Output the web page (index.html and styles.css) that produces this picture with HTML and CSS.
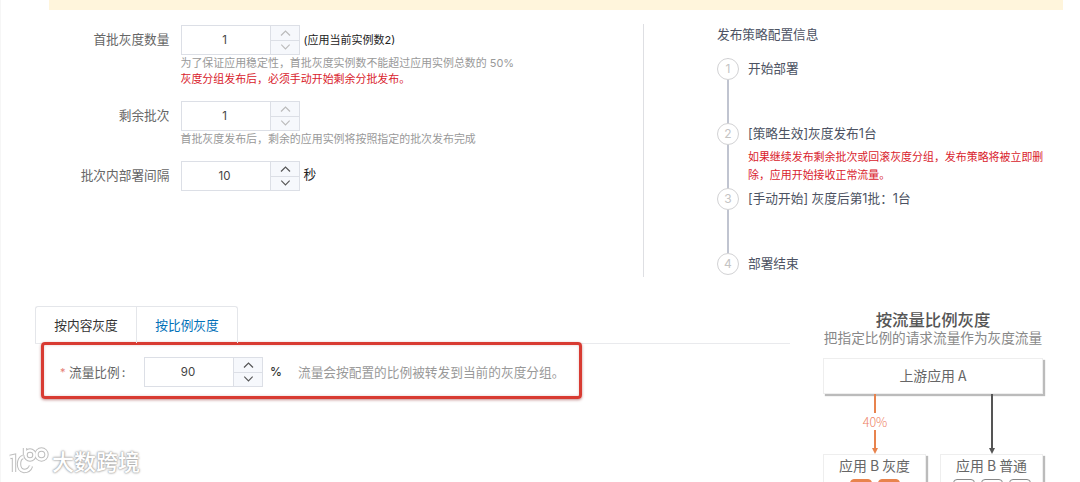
FILE: index.html
```html
<!DOCTYPE html>
<html lang="zh-CN">
<head>
    <meta charset="UTF-8">
    <meta name="viewport" content="width=device-width, initial-scale=1.0">
    <title>灰度发布</title>
    <link rel="stylesheet" href="styles.css">
</head>
<body>
    <div class="notice"></div>

    <div class="config">
        <form class="config-form">
            <div class="form-row row-first">
                <label class="label">首批灰度数量</label>
                <div class="field">
                    <div class="control">
                        <div class="stepper disabled">
                            <span class="value">1</span>
                            <div class="arrows">
                                <svg viewBox="0 0 28 14"><path d="M10 9.5l4.5-4.5 4.5 4.5"/></svg>
                                <svg viewBox="0 0 28 14"><path d="M10 4l4.5 4.5 4.5-4.5"/></svg>
                            </div>
                        </div>
                        <span class="unit small">(应用当前实例数2)</span>
                    </div>
                    <p class="hint">为了保证应用稳定性，首批灰度实例数不能超过应用实例总数的 50%</p>
                    <p class="hint warn">灰度分组发布后，必须手动开始剩余分批发布。</p>
                </div>
            </div>
            <div class="form-row row-second">
                <label class="label">剩余批次</label>
                <div class="field">
                    <div class="control">
                        <div class="stepper disabled">
                            <span class="value">1</span>
                            <div class="arrows">
                                <svg viewBox="0 0 28 14"><path d="M10 9.5l4.5-4.5 4.5 4.5"/></svg>
                                <svg viewBox="0 0 28 14"><path d="M10 4l4.5 4.5 4.5-4.5"/></svg>
                            </div>
                        </div>
                    </div>
                    <p class="hint">首批灰度发布后，剩余的应用实例将按照指定的批次发布完成</p>
                </div>
            </div>
            <div class="form-row">
                <label class="label">批次内部署间隔</label>
                <div class="field">
                    <div class="control">
                        <div class="stepper">
                            <span class="value">10</span>
                            <div class="arrows">
                                <svg viewBox="0 0 28 14"><path d="M10 9.5l4.5-4.5 4.5 4.5"/></svg>
                                <svg viewBox="0 0 28 14"><path d="M10 4l4.5 4.5 4.5-4.5"/></svg>
                            </div>
                        </div>
                        <span class="unit">秒</span>
                    </div>
                </div>
            </div>
        </form>

        <div class="strategy">
            <h3>发布策略配置信息</h3>
            <ol class="steps">
                <li><span class="num">1</span><div class="step-text">开始部署</div></li>
                <li>
                    <span class="num">2</span>
                    <div class="step-text">[策略生效]灰度发布1台
                        <p>如果继续发布剩余批次或回滚灰度分组，发布策略将被立即删<br>除，应用开始接收正常流量。</p>
                    </div>
                </li>
                <li><span class="num">3</span><div class="step-text">[手动开始] 灰度后第1批：1台</div></li>
                <li><span class="num">4</span><div class="step-text">部署结束</div></li>
            </ol>
        </div>
    </div>

    <div class="rules">
        <div class="rules-main">
            <div class="tabs">
                <div class="tab">按内容灰度</div>
                <div class="tab active">按比例灰度</div>
            </div>
            <div class="ratio">
                <span class="required">*</span>
                <label class="ratio-label">流量比例<span class="colon">:</span></label>
                <div class="stepper">
                    <span class="value">90</span>
                    <div class="arrows">
                        <svg viewBox="0 0 28 14"><path d="M10 9.5l4.5-4.5 4.5 4.5"/></svg>
                        <svg viewBox="0 0 28 14"><path d="M10 4l4.5 4.5 4.5-4.5"/></svg>
                    </div>
                </div>
                <span class="percent">%</span>
                <span class="ratio-hint">流量会按配置的比例被转发到当前的灰度分组。</span>
            </div>
        </div>

        <div class="diagram">
            <h4>按流量比例灰度</h4>
            <p class="subtitle">把指定比例的请求流量作为灰度流量</p>
            <div class="box upstream">上游应用 A</div>
            <div class="flows">
                <div class="flow gray-flow">
                    <span class="line short"></span>
                    <span class="rate">40%</span>
                    <span class="line"></span>
                    <span class="head"></span>
                </div>
                <div class="flow">
                    <span class="line"></span>
                    <span class="head"></span>
                </div>
            </div>
            <div class="targets">
                <div class="box target">
                    <span>应用 B 灰度</span>
                    <div class="nodes orange"><i></i><i></i></div>
                </div>
                <div class="box target">
                    <span>应用 B 普通</span>
                    <div class="nodes"><i></i><i></i><i></i></div>
                </div>
            </div>
        </div>
    </div>

    <div class="watermark">
        <svg class="logo" viewBox="0 0 44 32">
            <g class="logo-edge">
                <path d="M5 13l4-1v16"/>
                <path d="M18 13c-5 1-6 13 1 14 4 0 6-2 7-5"/>
                <path d="M20 4v7"/>
                <circle cx="25" cy="11" r="4.5"/>
                <circle cx="36.5" cy="10.5" r="5"/>
            </g>
            <g class="logo-face">
                <path d="M5 13l4-1v16"/>
                <path d="M18 13c-5 1-6 13 1 14 4 0 6-2 7-5"/>
                <path d="M20 4v7"/>
                <circle cx="25" cy="11" r="4.5"/>
                <circle cx="36.5" cy="10.5" r="5"/>
            </g>
        </svg>
        <span>大数跨境</span>
    </div>
</body>
</html>
```

FILE: styles.css
```css
* {
    box-sizing: border-box;
}
html {
    overflow: hidden;
}
body {
    position: relative;
    width: 1080px;
    height: 482px;
    margin: 0;
    overflow: hidden;
    border-left: 1px solid #f6f6f6;
    background-color: #fff;
    color: #333;
    font-family: Inter, "Noto Sans CJK SC", sans-serif;
    font-size: 12.7px;
}
h3, h4, p, ol {
    margin: 0;
    padding: 0;
    font-weight: normal;
}
.notice {
    width: 1014px;
    height: 10px;
    margin-left: 48px;
    background-color: #fff5dc;
}

/* form */
.config {
    display: flex;
    height: 253px;
    margin-top: 14px;
}
.config-form {
    width: 643px;
    padding-top: 1px;
    border-right: 1px solid #dedfe3;
}
.form-row {
    display: flex;
}
.row-first {
    height: 76px;
}
.row-second {
    height: 60px;
}
.label {
    width: 168.5px;
    margin-right: 11px;
    line-height: 29px;
    text-align: right;
    color: #666;
}
.control {
    display: flex;
    align-items: center;
}
.stepper {
    display: flex;
    width: 119px;
    height: 30px;
    border: 1px solid #dcdfe6;
}
.value {
    flex: 1;
    padding-right: 2px;
    line-height: 29px;
    text-align: center;
    font-size: 11.5px;
    color: #444;
}
.arrows {
    display: flex;
    flex-direction: column;
    width: 29px;
    border-left: 1px solid #dcdfe6;
    background-color: #f6f8fc;
}
.arrows svg {
    width: 28px;
    height: 14px;
    fill: none;
    stroke: #555;
    stroke-width: 1.2;
}
.arrows svg + svg {
    border-top: 1px solid #dcdfe6;
}
.disabled .arrows svg {
    stroke: #bbb;
}
.unit {
    margin-left: 4px;
    padding-bottom: 2px;
    line-height: 26px;
    color: #222;
}
.unit.small {
    padding-bottom: 0;
    font-size: 11px;
}
.hint {
    font-size: 10.95px;
    line-height: 16px;
    white-space: nowrap;
    color: #999;
}
.warn {
    color: #d9222c;
}

/* steps */
.strategy {
    margin-left: 73px;
    color: #4c5262;
}
.strategy h3 {
    height: 34px;
    font-size: 12.7px;
    line-height: 22px;
}
.steps {
    list-style: none;
}
.steps li {
    display: flex;
    gap: 9px;
    height: 65px;
    background: linear-gradient(#c0c4d0, #c0c4d0) 10px 0 / 2px 100% no-repeat;
}
.steps li:last-child {
    background: none;
}
.num {
    flex: none;
    width: 22px;
    height: 22px;
    border: 1px solid #d2d2d4;
    border-radius: 50%;
    background-color: #fff;
    color: #c4c4c4;
    font-size: 12px;
    line-height: 20px;
    text-align: center;
}
.step-text {
    line-height: 22.5px;
    white-space: nowrap;
}
.step-text p {
    margin-top: 2px;
    font-size: 10.95px;
    line-height: 18px;
    color: #d9222c;
}

/* rules */
.rules {
    display: flex;
    height: 176px;
    margin-top: 29px;
    overflow: hidden;
}
.rules-main {
    width: 755px;
    margin-left: 34px;
}
.tabs {
    display: flex;
    height: 38px;
    border-bottom: 1px solid #e9eaed;
}
.tab {
    width: 101px;
    border: 1px solid #e4e6ea;
    border-width: 1px 0 0 1px;
    border-top-left-radius: 3px;
    line-height: 38px;
    text-align: center;
    color: #333;
}
.tab.active {
    width: 102px;
    border-right-width: 1px;
    border-radius: 0 3px 0 0;
    color: #0070b8;
}
.ratio {
    display: flex;
    align-items: center;
    width: 541px;
    height: 57px;
    margin: -2px 0 0 6px;
    padding: 2px 0 0 16px;
    border: 3px solid #d83b32;
    border-radius: 4px;
    box-shadow: 0 1px 3px rgba(120, 0, 0, 0.45), inset 0 0 3px rgba(120, 0, 0, 0.2);
}
.required {
    width: 9px;
    color: #e58077;
    font-size: 11px;
}
.ratio-label {
    width: 75px;
    color: #666;
}
.colon {
    margin-left: 2px;
}
.percent {
    width: 28px;
    padding-left: 7px;
    font-size: 12px;
    font-weight: 500;
}
.ratio-hint {
    margin-left: 7px;
    white-space: nowrap;
    font-size: 12.7px;
    color: #999;
}

/* diagram */
.diagram {
    width: 220px;
    margin: 5px 0 0 33px;
    color: #666;
    text-align: center;
    font-family: "Noto Sans CJK SC", sans-serif;
}
.diagram h4 {
    font-size: 16.4px;
    font-weight: 500;
    line-height: 17px;
    color: #555;
}
.subtitle {
    margin-bottom: 12px;
    font-size: 13.65px;
    line-height: 18px;
    white-space: nowrap;
    color: #888;
}
.box {
    border: 1px solid #eee;
    background-color: #fff;
    box-shadow: 2px 2px 1px #bbb;
}
.upstream {
    height: 36px;
    font-size: 13.9px;
    line-height: 33px;
}
.flows {
    display: flex;
    height: 60px;
    padding-left: 32px;
    gap: 77px;
}
.flow {
    display: flex;
    flex-direction: column;
    align-items: center;
    width: 40px;
    color: #555;
}
.line {
    flex: 1;
    width: 2px;
    background-color: currentColor;
}
.line.short {
    flex: none;
    height: 19px;
}
.head {
    border: 3px solid transparent;
    border-top: 6px solid currentColor;
    border-bottom: 0;
}
.gray-flow {
    color: #e8834d;
}
.rate {
    line-height: 17px;
    font-size: 12.5px;
    font-weight: 300;
    color: #ee8366;
}
.targets {
    display: flex;
    justify-content: space-between;
}
.target {
    width: 103px;
    height: 60px;
    font-size: 13.9px;
    line-height: 21px;
}
.nodes {
    display: flex;
    justify-content: center;
    gap: 6px;
    margin-top: 3px;
}
.nodes i {
    width: 22px;
    height: 16px;
    border: 1px solid #888;
    border-radius: 4px;
}
.nodes.orange i {
    border-color: #e8834d;
    background-color: #e8834d;
}

/* watermark sits on top of the page */
.watermark {
    position: absolute;
    left: 4px;
    top: 444px;
    display: flex;
    color: #fff;
    font-size: 22px;
    font-weight: 500;
    line-height: 37px;
    text-shadow: 0 0 1px #aaa, 0 0 2px #999, 0 0 3px #bbb;
}
.logo {
    width: 44px;
    height: 32px;
    margin-right: 3px;
    fill: none;
}
.logo-edge {
    stroke: #bdbdbd;
    stroke-width: 4.4;
}
.logo-face {
    stroke: #fff;
    stroke-width: 2.4;
}
```
